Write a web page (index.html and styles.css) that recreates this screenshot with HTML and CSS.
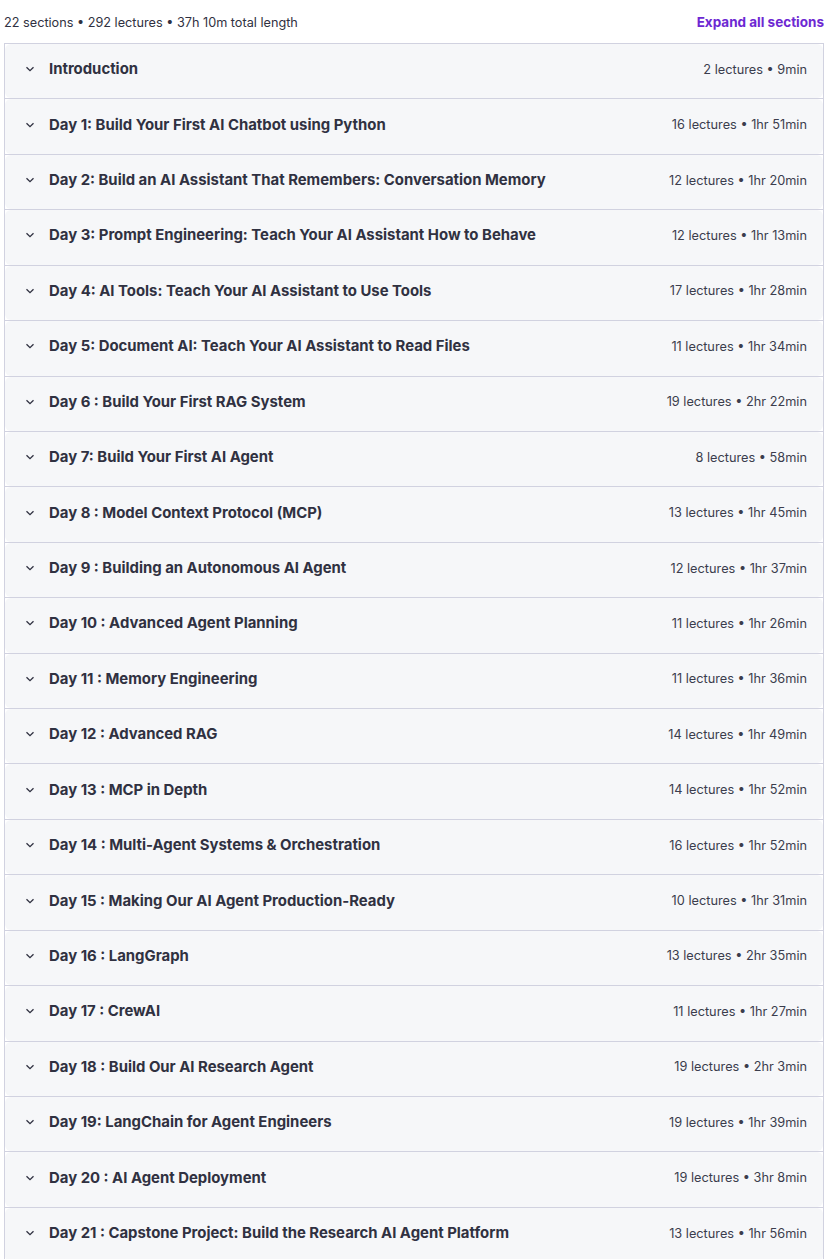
FILE: index.html
```html
<!DOCTYPE html>
<html>
<head>
	<link rel="stylesheet" href="styles.css">
</head>
<body>
	<div class="summary">
		<span>22 sections • 292 lectures • 37h 10m total length</span>
		<button class="expand">Expand all sections</button>
	</div>

	<div class="sections" id="sections"></div>

	<script>
	const sections = [
		['Introduction', 2, '9min'],
		['Day 1: Build Your First AI Chatbot using Python', 16, '1hr 51min'],
		['Day 2: Build an AI Assistant That Remembers: Conversation Memory', 12, '1hr 20min'],
		['Day 3: Prompt Engineering: Teach Your AI Assistant How to Behave', 12, '1hr 13min'],
		['Day 4: AI Tools: Teach Your AI Assistant to Use Tools', 17, '1hr 28min'],
		['Day 5: Document AI: Teach Your AI Assistant to Read Files', 11, '1hr 34min'],
		['Day 6 : Build Your First RAG System', 19, '2hr 22min'],
		['Day 7: Build Your First AI Agent', 8, '58min'],
		['Day 8 : Model Context Protocol (MCP)', 13, '1hr 45min'],
		['Day 9 : Building an Autonomous AI Agent', 12, '1hr 37min'],
		['Day 10 : Advanced Agent Planning', 11, '1hr 26min'],
		['Day 11 : Memory Engineering', 11, '1hr 36min'],
		['Day 12 : Advanced RAG', 14, '1hr 49min'],
		['Day 13 : MCP in Depth', 14, '1hr 52min'],
		['Day 14 : Multi-Agent Systems & Orchestration', 16, '1hr 52min'],
		['Day 15 : Making Our AI Agent Production-Ready', 10, '1hr 31min'],
		['Day 16 : LangGraph', 13, '2hr 35min'],
		['Day 17 : CrewAI', 11, '1hr 27min'],
		['Day 18 : Build Our AI Research Agent', 19, '2hr 3min'],
		['Day 19: LangChain for Agent Engineers', 19, '1hr 39min'],
		['Day 20 : AI Agent Deployment', 19, '3hr 8min'],
		['Day 21 : Capstone Project: Build the Research AI Agent Platform', 13, '1hr 56min']
	];

	const chevron = '<svg class="chevron" width="12" height="12" viewBox="0 0 12 12"><path d="M2.5 4.2 6 7.7l3.5-3.5" fill="none" stroke="currentColor" stroke-width="1.3"/></svg>';

	const list = document.getElementById('sections');
	for (const [title, count, length] of sections) {
		const row = document.createElement('div');
		row.className = 'section';
		row.innerHTML = `
			<div class="header">
				${chevron}
				<span class="title"></span>
				<span class="meta">${count} lectures • ${length}</span>
			</div>`;
		row.querySelector('.title').textContent = title;
		list.appendChild(row);
	}
	</script>
</body>
</html>
```

FILE: styles.css
```css
body {
	margin: 4px;
	font-family: Inter, "Noto Sans", sans-serif;
	color: #2d2f31;
	background: #fff;
}

.summary {
	display: flex;
	justify-content: space-between;
	align-items: center;
	height: 36px;
	padding-bottom: 3px;
	font-size: 12.7px;
	color: #303141;
}

.expand {
	border: none;
	background: none;
	padding: 0;
	font: inherit;
	font-weight: 700;
	font-size: 13.5px;
	color: #6d28d2;
	cursor: pointer;
}

.sections {
	border: 1px solid #d1d2e0;
	border-bottom: none;
}

.section {
	border-bottom: 1px solid #d1d2e0;
}

.header {
	display: flex;
	align-items: center;
	height: 54.43px;
	padding: 0 16px 4px 19px;
	box-sizing: border-box;
	background: #f6f7f9;
	border-radius: 6px;
}

.chevron {
	flex: none;
	color: #303141;
	margin-right: 13px;
}

.title {
	flex: 1;
	font-size: 14.9px;
	font-weight: 700;
	color: #303141;
}

.meta {
	font-size: 12.75px;
	color: #3b3d4d;
}
```
